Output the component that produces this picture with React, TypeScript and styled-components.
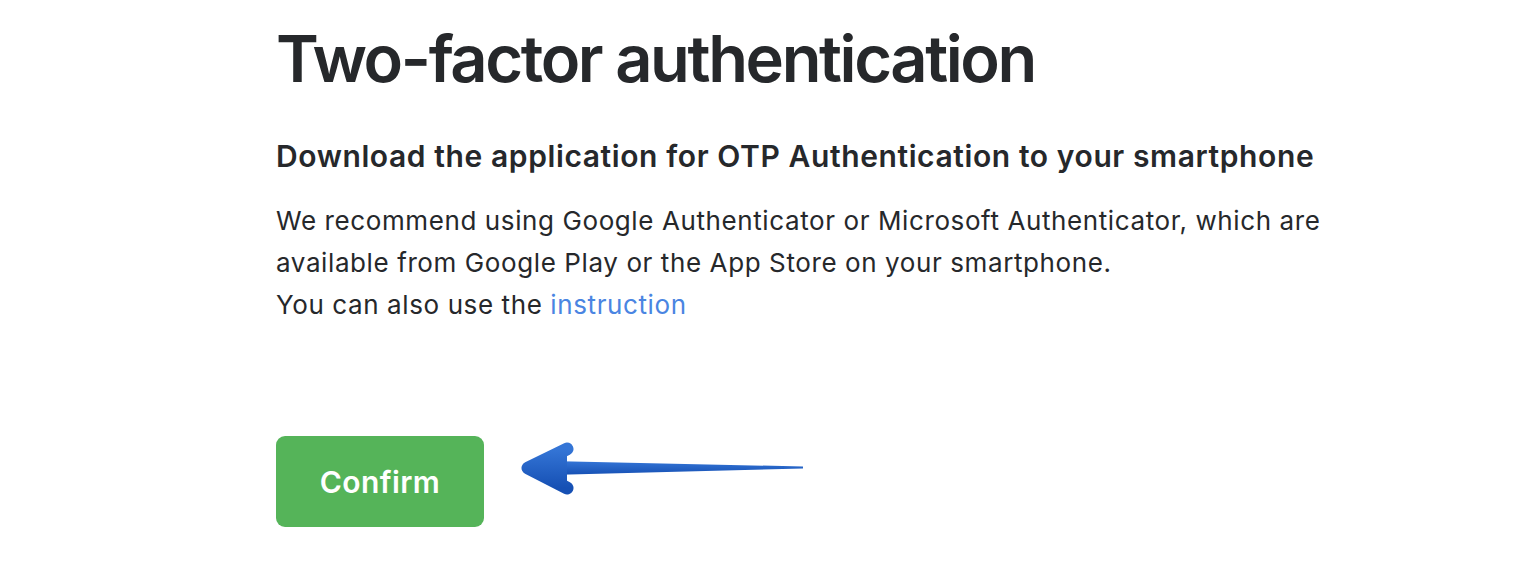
import styled, { createGlobalStyle } from 'styled-components'

const GlobalStyle = createGlobalStyle`
  body {
    margin: 0;
    background: #ffffff;
    font-family: Inter, "Noto Sans", "Liberation Sans", sans-serif;
    color: #26282b;
  }
`

export default function App() {
  return (
    <>
      <GlobalStyle />
      <Page>
        <Title>Two-factor authentication</Title>
        <Subtitle>Download the application for OTP Authentication to your smartphone</Subtitle>
        <Text>
          We recommend using Google Authenticator or Microsoft Authenticator, which are
          <br />
          available from Google Play or the App Store on your smartphone.
          <br />
          You can also use the <Link href="#">instruction</Link>
        </Text>
        <Actions>
          <ConfirmButton>Confirm</ConfirmButton>
          <PointerArrow />
        </Actions>
      </Page>
    </>
  )
}

function PointerArrow() {
  return (
    <ArrowSvg width="292" height="56" viewBox="0 0 292 56">
      <defs>
        <linearGradient id="arrowFill" x1="0" y1="0" x2="0" y2="1">
          <stop offset="0" stopColor="#3475d6" />
          <stop offset="1" stopColor="#1650b4" />
        </linearGradient>
      </defs>
      {/* shaft, tapering to the tail */}
      <path d="M34 21 L287 26.5 L287 28.5 L34 35 Z" fill="url(#arrowFill)" />
      {/* head */}
      <path
        d="M51 9 L12 28 L51 48"
        fill="url(#arrowFill)"
        stroke="url(#arrowFill)"
        strokeWidth="13"
        strokeLinecap="round"
        strokeLinejoin="round"
      />
    </ArrowSvg>
  )
}

const Page = styled.main`
  padding: 20px 0 0 276px;
`

const Title = styled.h1`
  margin: 0;
  font-size: 65px;
  line-height: 78px;
  font-weight: 600;
  letter-spacing: -2.4px;
`

const Subtitle = styled.h2`
  margin: 38px 0 0;
  font-size: 30px;
  line-height: 40px;
  font-weight: 600;
  letter-spacing: 0.6px;
`

const Text = styled.p`
  margin: 24px 0 0;
  font-size: 26px;
  line-height: 42px;
  font-weight: 400;
  letter-spacing: 0.6px;
`

const Link = styled.a`
  color: #4a85e2;
  text-decoration: none;
`

const Actions = styled.div`
  display: flex;
  align-items: flex-start;
  gap: 32px;
  margin-top: 110px;
`

const ConfirmButton = styled.button`
  width: 208px;
  height: 91px;
  border: none;
  border-radius: 9px;
  background: #55b459;
  color: #ffffff;
  font-family: inherit;
  font-size: 30px;
  font-weight: 600;
  letter-spacing: 0.4px;
  cursor: pointer;
`

const ArrowSvg = styled.svg`
  display: block;
  margin-top: 4px;
`
